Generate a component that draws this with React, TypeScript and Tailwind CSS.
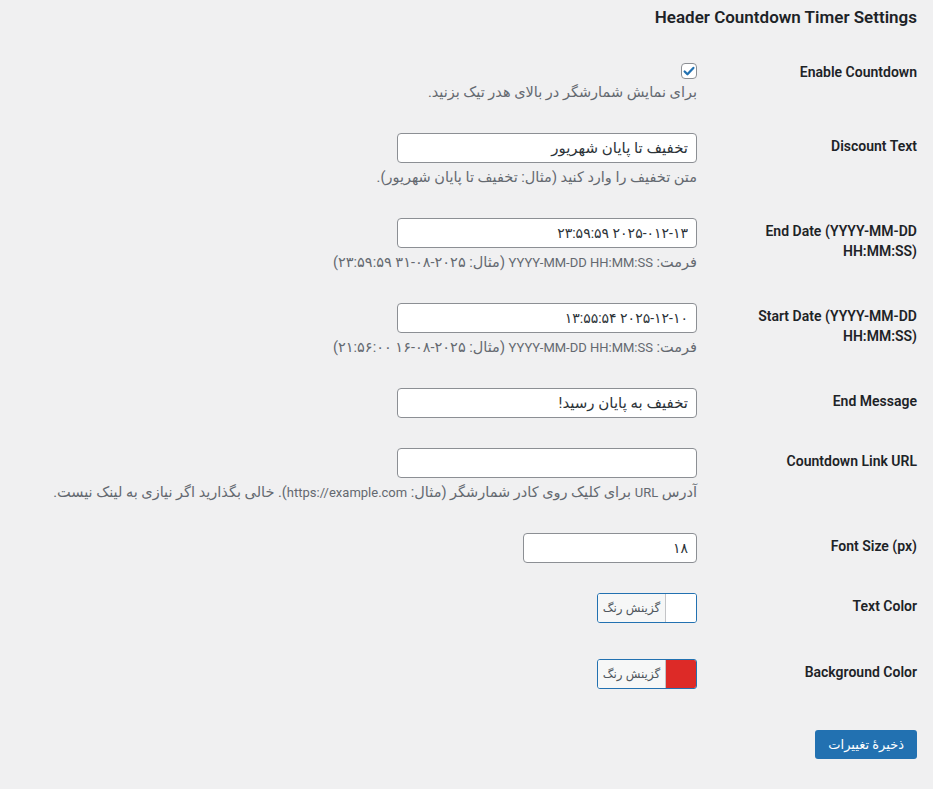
import React from 'react';

type RowProps = {
  label: React.ReactNode;
  children: React.ReactNode;
  last?: string;
};

const Row: React.FC<RowProps> = ({ label, children, last = 'pb-[14px]' }) => (
  <div className="flex">
    <div className="w-[210px] shrink-0 pl-[10px] pt-[19px] text-[14px] font-semibold leading-[20px] text-[#1d2327]">
      {label}
    </div>
    <div className={`flex-1 pr-[10px] pt-[16px] ${last}`}>{children}</div>
  </div>
);

const Desc: React.FC<{ children: React.ReactNode; className?: string }> = ({ children, className = 'mt-[5px]' }) => (
  <p className={`${className} text-[14.5px] leading-[20px] text-[#646970] whitespace-nowrap`}>{children}</p>
);

// latin runs inside persian help texts keep the 13px admin size
const En: React.FC<{ children: React.ReactNode }> = ({ children }) => <span className="text-[13px]">{children}</span>;

const TextInput: React.FC<{ value?: string; width?: string; size?: string }> = ({
  value = '',
  width = 'w-[300px]',
  size = 'text-[15px]',
}) => (
  <input
    type="text"
    defaultValue={value}
    className={`block h-[30px] ${width} rounded-[4px] border border-[#8c8f94] bg-white px-2 ${size} text-[#2c3338] outline-none`}
  />
);

const ColorButton: React.FC<{ swatch: string }> = ({ swatch }) => (
  <button
    type="button"
    className="flex h-[30px] w-[100px] overflow-hidden rounded-[3px] border border-[#2271b1] bg-[#f6f7f7]"
  >
    <span className={`h-full w-[30px] shrink-0 ${swatch}`} />
    <span className="flex h-full flex-1 items-center justify-center border-r border-[#c3c4c7] bg-[#f6f7f7] text-[12px] text-[#50575e]">
      گزینش رنگ
    </span>
  </button>
);

export default function App() {
  return (
    <div
      dir="rtl"
      className="min-h-screen bg-[#f0f0f1] px-4 font-[Roboto,'DejaVu_Sans',sans-serif] text-[#1d2327]"
    >
      <h2 className="pt-[6px] text-[17px] font-semibold leading-[22px]">Header Countdown Timer Settings</h2>

      <div className="mt-[15px]">
        <Row label="Enable Countdown">
          <span className="mt-[4px] flex h-4 w-4 items-center justify-center rounded-[4px] border border-[#8c8f94] bg-white">
            <svg width="14" height="14" viewBox="0 0 16 16" fill="none">
              <path d="M3 8.5l3.2 3.2L13 4.5" stroke="#2271b1" strokeWidth="2.6" strokeLinecap="round" strokeLinejoin="round" />
            </svg>
          </span>
          <Desc className="mt-[4px]">برای نمایش شمارشگر در بالای هدر تیک بزنید.</Desc>
        </Row>

        <Row label="Discount Text">
          <TextInput value="تخفیف تا پایان شهریور" />
          <Desc>متن تخفیف را وارد کنید (مثال: تخفیف تا پایان شهریور).</Desc>
        </Row>

        <Row label="End Date (YYYY-MM-DD HH:MM:SS)">
          <TextInput value="۲۰۲۵-۰۱۲-۱۳ ۲۳:۵۹:۵۹" size="text-[14px]" />
          <Desc>
            فرمت: <En>YYYY-MM-DD HH:MM:SS</En> (مثال: ۲۰۲۵-۰۸-۳۱ ۲۳:۵۹:۵۹)
          </Desc>
        </Row>

        <Row label="Start Date (YYYY-MM-DD HH:MM:SS)">
          <TextInput value="۲۰۲۵-۱۲-۱۰ ۱۳:۵۵:۵۴" size="text-[14px]" />
          <Desc>
            فرمت: <En>YYYY-MM-DD HH:MM:SS</En> (مثال: ۲۰۲۵-۰۸-۱۶ ۲۱:۵۶:۰۰)
          </Desc>
        </Row>

        <Row label="End Message">
          <TextInput value="تخفیف به پایان رسید!" />
        </Row>

        <Row label="Countdown Link URL">
          <TextInput />
          <Desc>
            آدرس <En>URL</En> برای کلیک روی کادر شمارشگر (مثال: <En>https://example.com</En>). خالی بگذارید اگر نیازی به لینک نیست.
          </Desc>
        </Row>

        <Row label="Font Size (px)">
          <TextInput value="۱۸" width="w-[174px]" size="text-[14px]" />
        </Row>

        <Row label="Text Color" last="pb-[20px]">
          <ColorButton swatch="bg-white" />
        </Row>

        <Row label="Background Color">
          <ColorButton swatch="bg-[#dd2a27]" />
        </Row>
      </div>

      <div className="pt-[27px] pb-8">
        <button
          type="button"
          className="h-[29px] rounded-[3px] bg-[#2271b1] px-[13px] text-[13px] text-white"
        >
          ذخیرهٔ تغییرات
        </button>
      </div>
    </div>
  );
}
